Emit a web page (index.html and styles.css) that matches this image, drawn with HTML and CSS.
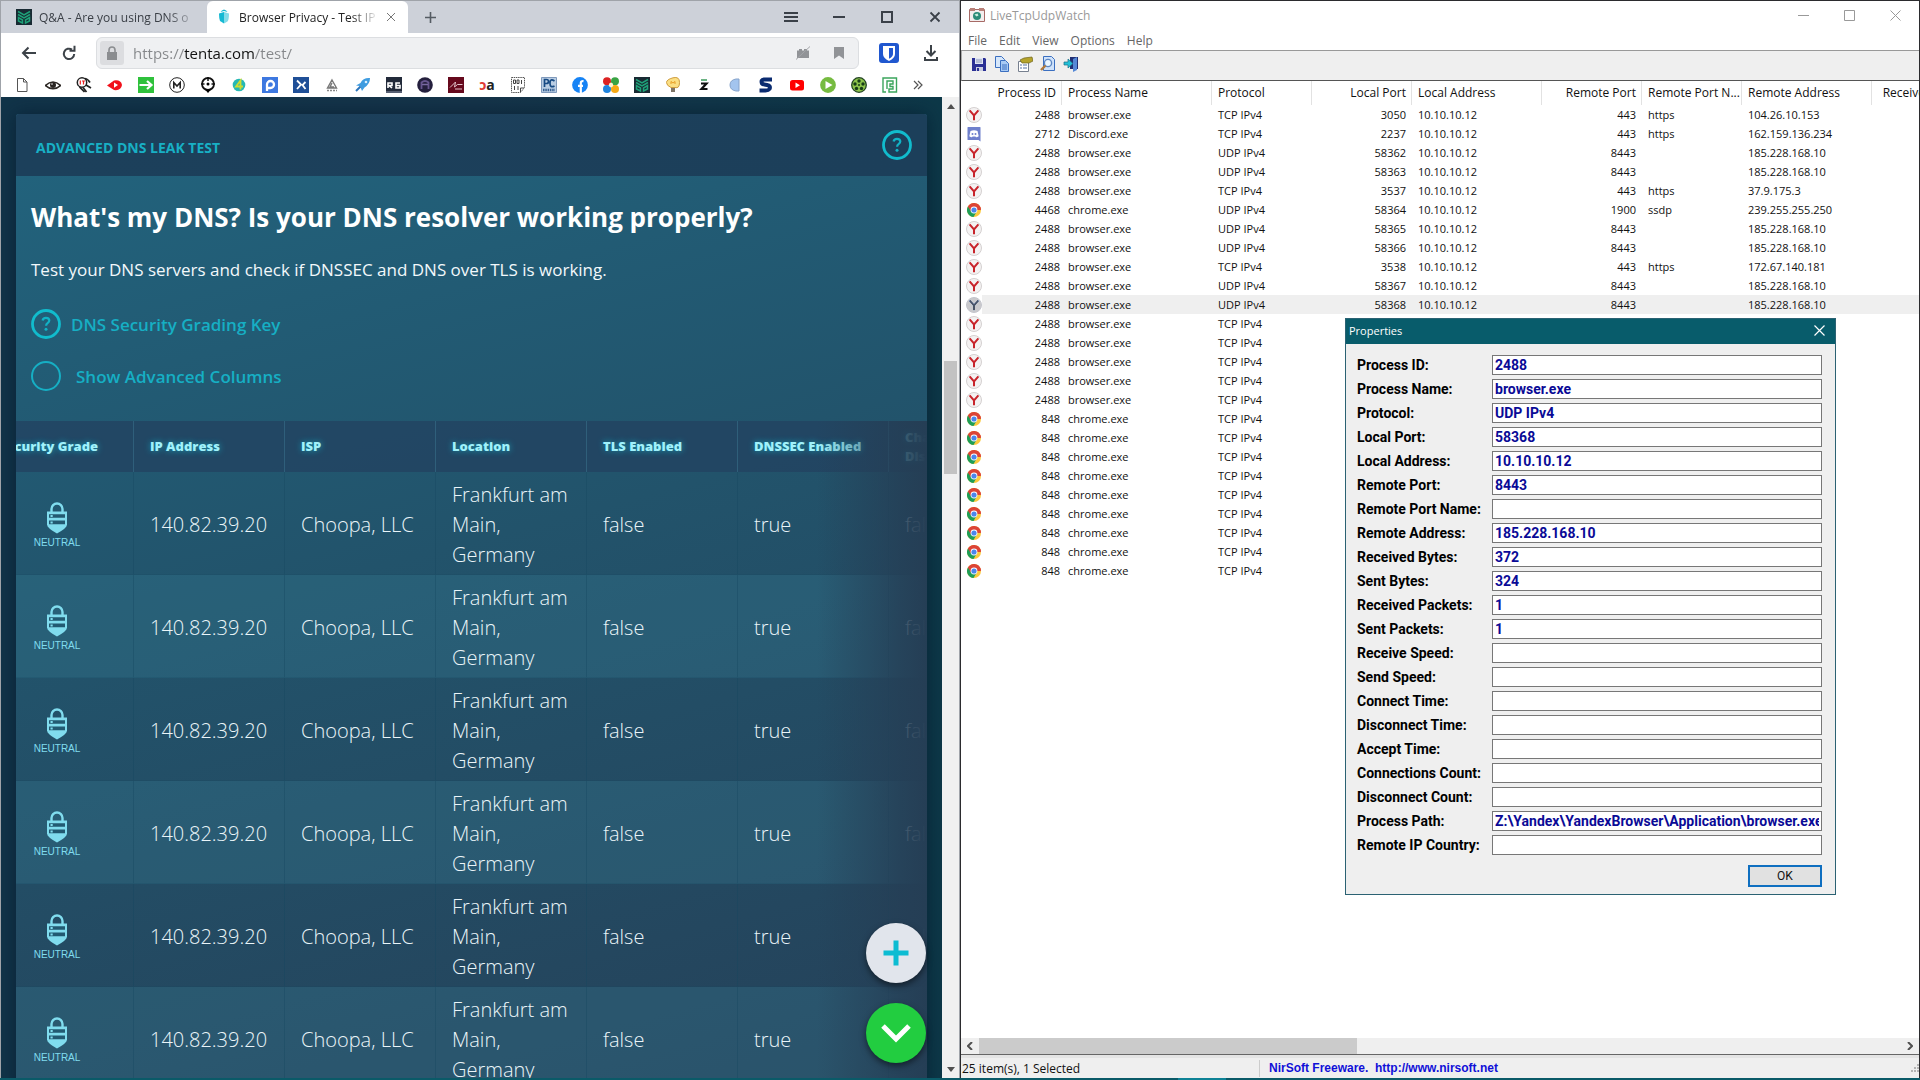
FILE: index.html
```html
<!DOCTYPE html>
<html lang="en">
<head>
    <meta charset="UTF-8">
    <meta name="viewport" content="width=device-width, initial-scale=1.0">
    <title>Browser Privacy - Test IP</title>
    <link rel="stylesheet" href="styles.css">
</head>
<body>
    <!-- Shared icons -->
    <svg class="defs" aria-hidden="true">
        <symbol id="i-yandex" viewBox="0 0 16 16">
            <circle cx="8" cy="8" r="7.500" fill="#f4f2f2" stroke="#d4d0d0"/>
            <path d="M3.600 3.400 8 8.400l4.400-5M8 8v5.200" fill="none" stroke="#c8242b" stroke-width="2"/>
        </symbol>
        <symbol id="i-chrome" viewBox="0 0 16 16">
            <circle cx="8" cy="8" r="7" fill="#fbc93d"/>
            <path d="M8 8 1.900 4.500A7 7 0 0 0 7.500 15l3.300-5.500z" fill="#1e9e57"/>
            <path d="M8 8H14.900V5.600H14.600A7 7 0 0 0 1.900 4.500L5 9.500z" fill="#dc4437"/>
            <circle cx="8" cy="8" r="3.400" fill="#fff"/>
            <circle cx="8" cy="8" r="2.600" fill="#4a86ec"/>
        </symbol>
        <symbol id="i-discord" viewBox="0 0 16 16">
            <path d="M2 1h12q.5 0 .5.5V15.500l-2-1.500H2q-.5 0-.5-.5v-12Q1.500 1 2 1z" fill="#6f80cc"/>
            <path d="M4.500 5q3.500-1.600 7 0l1.200 5.200q-1.700 1.300-2.700 1.100l-.6-.9h-2.800l-.6.9q-1 .2-2.700-1.100z" fill="#fff"/>
            <circle cx="6.500" cy="8" r="1" fill="#6f80cc"/>
            <circle cx="9.500" cy="8" r="1" fill="#6f80cc"/>
        </symbol>
        <symbol id="i-shield" viewBox="0 0 22 32">
            <path d="M5.500 10V7a5.500 5.500 0 0 1 11 0v3" fill="none" stroke="#80dcee" stroke-width="2.400"/>
            <path d="M1 9.500h20v13q0 3.500-10 9-10-5.500-10-9z" fill="#80dcee"/>
            <path d="M3 12.200h16v3.600H3zM3 18.600h16v3.600H3z" fill="#225a72"/>
            <path d="M4.500 13h2.200v2H4.500zM4.500 19.400h2.200v2H4.500z" fill="#80dcee"/>
        </symbol>
        <symbol id="i-leaf" viewBox="0 0 16 16">
            <path d="M0 0h16v16H0z" fill="#182a33"/>
            <path d="M2 2.500 8 6l6-3.500M2 5.500 8 9l6-3.500M2.500 8.500V12L6.500 14V11zM13.500 8.500V12L9.500 14V11z" fill="none" stroke="#1ea279" stroke-width="1.500"/>
        </symbol>
        <symbol id="i-help" viewBox="0 0 30 30">
            <circle cx="15" cy="15" r="13.500" fill="none" stroke="#11bccd" stroke-width="2.800"/>
            <path d="M11.600 11.500q.4-2.600 3.400-2.600 3.300 0 3.300 2.700 0 1.400-1.700 2.500-1.500 1-1.500 2.700" fill="none" stroke="#11b3c6" stroke-width="2.200"/>
            <circle cx="15" cy="20.300" r="1.500" fill="#11b3c6"/>
        </symbol>
    </svg>

    <div class="desktop">
        <!-- Browser window -->
        <section class="browser">
            <div class="tabstrip">
                <div class="tab">
                    <svg class="icon"><use href="#i-leaf"/></svg>
                    <span class="tab-title">Q&amp;A - Are you using DNS o</span>
                </div>
                <div class="tab active">
                    <svg class="icon" viewBox="0 0 16 16"><path d="M3 4.500 8 3v11.500L4 12q-1-3-1-7.500z" fill="#15b9d3"/><path d="M8 3l5 1.500q0 6-1.500 8L8 14.500z" fill="#83dce9"/><path d="M4.500 3q1-2 3.500-2.500Q10.500 1 11.500 3L8 2z" fill="#15b9d3"/></svg>
                    <span class="tab-title">Browser Privacy - Test IP</span>
                    <button class="plain" aria-label="Close tab"><svg width="10" height="10" viewBox="0 0 10 10"><path d="M1 1l8 8M9 1L1 9" stroke="#777"/></svg></button>
                </div>
                <button class="plain new-tab" aria-label="New tab"><svg width="11" height="11" viewBox="0 0 11 11"><path d="M5.500 0v11M0 5.500h11" stroke="#555c63" stroke-width="1.600"/></svg></button>
                <div class="win-buttons">
                    <button class="plain" aria-label="Menu"><svg width="16" height="16" viewBox="0 0 16 16"><path d="M1 4h14M1 8h14M1 12h14" stroke="#3a4048" stroke-width="2"/></svg></button>
                    <button class="plain" aria-label="Minimize"><svg width="16" height="16" viewBox="0 0 16 16"><path d="M2 8h12" stroke="#3a4048" stroke-width="2"/></svg></button>
                    <button class="plain" aria-label="Maximize"><svg width="16" height="16" viewBox="0 0 16 16"><path d="M3 3h10v10H3z" fill="none" stroke="#3a4048" stroke-width="2"/></svg></button>
                    <button class="plain" aria-label="Close"><svg width="16" height="16" viewBox="0 0 16 16"><path d="M3.500 3.500l9 9M12.500 3.500l-9 9" stroke="#3a4048" stroke-width="1.800"/></svg></button>
                </div>
            </div>

            <div class="navbar">
                <button class="plain" aria-label="Back"><svg width="16" height="16" viewBox="0 0 16 16"><path d="M15 8H2M7.500 2.500 2 8l5.500 5.500" fill="none" stroke="#3c4248" stroke-width="2"/></svg></button>
                <button class="plain" aria-label="Reload"><svg width="16" height="16" viewBox="0 0 16 16"><path d="M11 4.600A5.200 5.200 0 1 0 13.200 9" fill="none" stroke="#3c4248" stroke-width="2"/><path d="M8.500 5.800h5V.8" fill="none" stroke="#3c4248" stroke-width="2"/></svg></button>
                <div class="address">
                    <button class="lock" aria-label="Site information"><svg width="12" height="14" viewBox="0 0 12 14"><path d="M3 7V4a3 3 0 0 1 6 0v3" fill="none" stroke="#8b8d90" stroke-width="1.600"/><path d="M1 6h10v8H1z" fill="#8b8d90"/></svg></button>
                    <input class="url" type="text" aria-label="Address" value="https://tenta.com/test/">
                    <button class="plain" aria-label="Turbo"><svg width="16" height="16" viewBox="0 0 16 16"><path d="M2 5.500h2V4h3v1.500h2V4h3v1.500h2V13H2z" fill="#919397"/><path d="M1 14.500 15 1.500" stroke="#a2a4a8"/></svg></button>
                    <button class="plain" aria-label="Bookmark"><svg width="12" height="14" viewBox="0 0 12 14"><path d="M1 1h10v12L6 9.500 1 13z" fill="#919397"/></svg></button>
                </div>
                <button class="plain" aria-label="Bitwarden"><svg width="20" height="20" viewBox="0 0 20 20"><rect width="20" height="20" rx="3" fill="#2057cf"/><path d="M4 3h12v8q0 4-6 7-6-3-6-7z" fill="#fff"/><path d="M10 5h4v6q0 2.500-4 4.800z" fill="#2057cf"/></svg></button>
                <button class="plain" aria-label="Downloads"><svg width="16" height="18" viewBox="0 0 16 18"><path d="M8 1v10M3.500 7 8 11.500 12.500 7M2 13v3h12v-3" fill="none" stroke="#3c4248" stroke-width="2"/></svg></button>
            </div>

            <nav class="bookmarks">
                <a href="#" aria-label="Page"><svg class="icon" viewBox="0 0 16 16"><path d="M3.500 1.500h6l3.500 3.500v9.500H3.500zM9.500 1.500V5H13" fill="none" stroke="#555"/></svg></a>
                <a href="#" aria-label="Eye"><svg class="icon" viewBox="0 0 16 16"><path d="M.5 8.500Q8 1.500 15.500 8.500 8 15 .5 8.500z" fill="#fff" stroke="#2d2825" stroke-width="1.600"/><circle cx="8" cy="8" r="3" fill="#2a2523"/><circle cx="7" cy="7" r=".8" fill="#fff"/></svg></a>
                <a href="#" aria-label="IT"><svg class="icon" viewBox="0 0 16 16"><circle cx="6" cy="5.500" r="4.700" fill="#fff" stroke="#222" stroke-width="1.500"/><path d="M4.300 3.500v4M6 4h3M7.500 4v3.500" stroke="#e22" stroke-width="1.200"/><path d="M3.500 10l5 5M7 10.500l3.500 4.500M10 8l5 3M9 1.500q3 .5 5 4" fill="none" stroke="#222" stroke-width="1.700"/></svg></a>
                <a href="#" aria-label="Stream"><svg class="icon" viewBox="0 0 16 16"><path d="M0 8.500 7 3.500q7-1 8 4.500-1 6-8 5z" fill="#f1111b"/><path d="M7 5.500 11 8l-4 2.800z" fill="#fff"/></svg></a>
                <a href="#" aria-label="Arrow"><svg class="icon" viewBox="0 0 16 16"><path d="M0 0h16v16H0z" fill="#2fc13c"/><path d="M1.500 8H12M9 4l4.500 4L9 12" fill="none" stroke="#fff" stroke-width="2.200"/></svg></a>
                <a href="#" aria-label="M"><svg class="icon" viewBox="0 0 16 16"><circle cx="8" cy="8" r="7.300" fill="#fff" stroke="#222"/><path d="M4.800 11.500V5.500L8 9l3.200-3.500v6" fill="none" stroke="#222" stroke-width="1.600"/></svg></a>
                <a href="#" aria-label="Target"><svg class="icon" viewBox="0 0 16 16"><circle cx="8" cy="7" r="6" fill="none" stroke="#111" stroke-width="1.800"/><path d="M8 0v4M1 7h3.500M11.500 7H15" stroke="#111" stroke-width="1.500"/><circle cx="8" cy="7" r="1.500"/><path d="M5 12.500h6L8 16z"/></svg></a>
                <a href="#" aria-label="Four"><svg class="icon" viewBox="0 0 16 16"><circle cx="8" cy="8" r="6.300" fill="#25b8b4"/><path d="M9.500 12.500v-9L5 9.500h7" fill="none" stroke="#cddb31" stroke-width="1.800"/></svg></a>
                <a href="#" aria-label="P"><svg class="icon" viewBox="0 0 16 16"><path d="M0 0h16v16H0z" fill="#3d78e0"/><path d="M5 14V7.500a3.500 3.500 0 1 1 3.500 3.500H5" fill="none" stroke="#fff" stroke-width="2.300"/></svg></a>
                <a href="#" aria-label="Crossing"><svg class="icon" viewBox="0 0 16 16"><path d="M0 0h16v16H0z" fill="#1f4f97"/><path d="M4 3.500 8 7.500 4 12M12.500 5 9.500 8l3 4" fill="none" stroke="#fff" stroke-width="1.800"/></svg></a>
                <a href="#" aria-label="Pyramid"><svg class="icon" viewBox="0 0 16 16"><path d="M8 3l4.500 8H3.500zM8 6l-2 4h4" fill="none" stroke="#777" stroke-width="1.400"/><path d="M3 13.500h10" stroke="#888" stroke-width="1.500" stroke-dasharray="2 1"/></svg></a>
                <a href="#" aria-label="Rocket"><svg class="icon" viewBox="0 0 16 16"><path d="M15 1q-7-.5-9.500 5L1 8.500l4 .5 2 5 2.500-3.500Q15 7 15 1z" fill="#3f9ce0"/><path d="M1 14l4.500-4.500" stroke="#2b75bd" stroke-width="2"/><circle cx="11" cy="5" r="1.300" fill="#d8efff"/></svg></a>
                <a href="#" aria-label="R6"><svg class="icon" viewBox="0 0 16 16"><path d="M0 0h16v16H0z" fill="#222a3a"/><path d="M2 11V6h4v2.500H3L6 11M14 6h-4v5h4V8.500h-4" fill="none" stroke="#fff" stroke-width="1.600"/><path d="M0 14h16v2H0z" fill="#575f72"/></svg></a>
                <a href="#" aria-label="Helmet"><svg class="icon" viewBox="0 0 16 16"><circle cx="8" cy="8" r="7.800" fill="#241f3d"/><path d="M4.500 12V5.500q3.500-3 7 0V12" fill="none" stroke="#67568f" stroke-width="1.800"/><path d="M5 7.500h6" stroke="#796aa2" stroke-width="1.500"/></svg></a>
                <a href="#" aria-label="Signature"><svg class="icon" viewBox="0 0 16 16"><path d="M0 0h16v16H0z" fill="#66091d"/><path d="M2 10.500 7.500 5l-1 5 3-2.500h5M7 12h7" fill="none" stroke="#e3c5cc"/></svg></a>
                <a href="#" class="mark" aria-label="oa"><b class="red">ɔ</b><b>a</b></a>
                <a href="#" aria-label="Binary"><svg class="icon" viewBox="0 0 16 16"><path d="M1.500.5h13v10l-4 5h-9z" fill="#fff" stroke="#555" stroke-dasharray="1.500 .7"/><path d="M3.500 3h2v3.500h-2zM7 3h2v3.500H7zM11.500 3v4M4.500 9v4M8 9v4" fill="none" stroke="#444"/><path d="M14 11h-3.500v4" fill="none" stroke="#444"/></svg></a>
                <a href="#" aria-label="PC"><svg class="icon" viewBox="0 0 16 16"><path d="M.5.5h15v15H.5z" fill="#b9cde3" stroke="#7f99bb"/><path d="M3.500 10V2.500h2q2 0 2 2t-2 2h-2M13.500 4q-4.500-3-4.500 2.200t4.500 2.700" fill="none" stroke="#174a83" stroke-width="1.700"/><path d="M2 13h12" stroke="#355f91" stroke-width="2.500" stroke-dasharray="1.500 .8"/></svg></a>
                <a href="#" aria-label="Facebook"><svg class="icon" viewBox="0 0 16 16"><circle cx="8" cy="8" r="7.900" fill="#1683f5"/><path d="M8.800 16V5.800q0-2 2.700-1.700M6 8.800h5" fill="none" stroke="#fff" stroke-width="2.200"/></svg></a>
                <a href="#" aria-label="Colours"><svg class="icon" viewBox="0 0 16 16"><circle cx="4" cy="4.200" r="4" fill="#db2222"/><circle cx="12" cy="4.200" r="4" fill="#39a344"/><circle cx="4" cy="12" r="4" fill="#1e83dd"/><circle cx="12" cy="12" r="4" fill="#f7a915"/><circle cx="8" cy="8" r="2.200" fill="#fff3d0"/></svg></a>
                <a href="#" aria-label="Q&amp;A"><svg class="icon"><use href="#i-leaf"/></svg></a>
                <a href="#" aria-label="Ideas"><svg class="icon" viewBox="0 0 16 16"><path d="M6 10.500Q1.500 8.500 1.500 5.500T8 .8t6.500 4.700T10 10.500z" fill="#fbdf83" stroke="#cf9d3f"/><path d="M6 7V4.500L8 6l2-1.500V7" fill="none" stroke="#e79d25"/><path d="M6 11h4v4H6z" fill="#7d7467"/></svg></a>
                <a href="#" aria-label="z"><svg class="icon" viewBox="0 0 16 16"><path d="M5 3h6" stroke="#3a9a5a" stroke-width="1.500"/><path d="M5 6.500h5.500L5.500 12H11.500" fill="none" stroke="#111" stroke-width="2.200"/></svg></a>
                <a href="#" aria-label="Half"><svg class="icon" viewBox="0 0 16 16"><path d="M12 2v12H9q-6-1-6-6t6-6z" fill="#a3c4ee" stroke="#86a3cb"/></svg></a>
                <a href="#" aria-label="S"><svg class="icon" viewBox="0 0 16 16"><path d="M14 2.500H6Q2.500 3 4 6.500 5 7.500 9 8q4 .8 2.500 4-1 1.500-4 1.500h-6" fill="none" stroke="#0a2b70" stroke-width="4"/></svg></a>
                <a href="#" aria-label="YouTube"><svg class="icon" viewBox="0 0 16 16"><rect x="1" y="3" width="14" height="10.500" rx="2.500" fill="#f00"/><path d="M6.500 5.500 11 8.200l-4.500 2.800z" fill="#fff"/></svg></a>
                <a href="#" aria-label="Play"><svg class="icon" viewBox="0 0 16 16"><circle cx="8" cy="8" r="7.900" fill="#76bb40"/><path d="M5.500 4 12.500 8l-7 4z" fill="#fff"/></svg></a>
                <a href="#" aria-label="Film"><svg class="icon" viewBox="0 0 16 16"><circle cx="8" cy="8" r="7.300" fill="#8bc34a" stroke="#242" stroke-width="1.300"/><g fill="#173d17"><circle cx="8" cy="4" r="1.700"/><circle cx="12" cy="7" r="1.700"/><circle cx="4" cy="7" r="1.700"/><circle cx="5.500" cy="11.500" r="1.700"/><circle cx="10.500" cy="11.500" r="1.700"/><circle cx="8" cy="8" r="1"/></g></svg></a>
                <a href="#" aria-label="Maze"><svg class="icon" viewBox="0 0 16 16"><path d="M4 15H1V1h13.500v14H7v-3h4V9.500H8V7h3V4H5v8" fill="none" stroke="#3ba55c" stroke-width="1.400"/></svg></a>
                <button class="plain more" aria-label="More bookmarks"><svg width="10" height="10" viewBox="0 0 10 10"><path d="M1 1l4 4-4 4M5 1l4 4-4 4" fill="none" stroke="#555" stroke-width="1.200"/></svg></button>
            </nav>

            <div class="viewport">
                <div class="page">
                    <div class="card">
                        <header class="card-head">
                            <h2>ADVANCED DNS LEAK TEST</h2>
                            <button class="plain" aria-label="Help"><svg width="30" height="30"><use href="#i-help"/></svg></button>
                        </header>
                        <div class="intro">
                            <h1>What's my DNS? Is your DNS resolver working properly?</h1>
                            <p>Test your DNS servers and check if DNSSEC and DNS over TLS is working.</p>
                            <a class="option" href="#"><svg width="30" height="30"><use href="#i-help"/></svg>DNS Security Grading Key</a>
                            <label class="option toggle"><input type="checkbox">Show Advanced Columns</label>
                        </div>
                        <div class="scroller">
                            <table class="results">
                                <thead>
                                    <tr><th>Security Grade</th><th>IP Address</th><th>ISP</th><th>Location</th><th>TLS Enabled</th><th>DNSSEC Enabled</th><th>Chain<br>Discovery</th></tr>
                                </thead>
                                <tbody>
                                    <tr><td><div class="grade"><svg><use href="#i-shield"/></svg>NEUTRAL</div></td><td>140.82.39.20</td><td>Choopa, LLC</td><td>Frankfurt am Main, Germany</td><td>false</td><td>true</td><td>false</td></tr>
                                    <tr><td><div class="grade"><svg><use href="#i-shield"/></svg>NEUTRAL</div></td><td>140.82.39.20</td><td>Choopa, LLC</td><td>Frankfurt am Main, Germany</td><td>false</td><td>true</td><td>false</td></tr>
                                    <tr><td><div class="grade"><svg><use href="#i-shield"/></svg>NEUTRAL</div></td><td>140.82.39.20</td><td>Choopa, LLC</td><td>Frankfurt am Main, Germany</td><td>false</td><td>true</td><td>false</td></tr>
                                    <tr><td><div class="grade"><svg><use href="#i-shield"/></svg>NEUTRAL</div></td><td>140.82.39.20</td><td>Choopa, LLC</td><td>Frankfurt am Main, Germany</td><td>false</td><td>true</td><td>false</td></tr>
                                    <tr><td><div class="grade"><svg><use href="#i-shield"/></svg>NEUTRAL</div></td><td>140.82.39.20</td><td>Choopa, LLC</td><td>Frankfurt am Main, Germany</td><td>false</td><td>true</td><td>false</td></tr>
                                    <tr><td><div class="grade"><svg><use href="#i-shield"/></svg>NEUTRAL</div></td><td>140.82.39.20</td><td>Choopa, LLC</td><td>Frankfurt am Main, Germany</td><td>false</td><td>true</td><td>false</td></tr>
                                </tbody>
                            </table>
                        </div>
                    </div>
                    <div class="fabs">
                        <button class="fab" aria-label="Add"><svg width="26" height="26" viewBox="0 0 26 26"><path d="M13 .5v25M.5 13h25" stroke="#0cbcd2" stroke-width="5"/></svg></button>
                        <button class="fab green" aria-label="Scroll down"><svg width="30" height="20" viewBox="0 0 30 20"><path d="M2 3l13 13L28 3" fill="none" stroke="#fff" stroke-width="5"/></svg></button>
                    </div>
                </div>
                <div class="vscroll">
                    <svg width="8" height="5" viewBox="0 0 8 5"><path d="M0 5l4-5 4 5z" fill="#505050"/></svg>
                    <div class="vthumb"></div>
                    <svg width="8" height="5" viewBox="0 0 8 5"><path d="M0 0l4 5 4-5z" fill="#505050"/></svg>
                </div>
            </div>
        </section>

        <!-- LiveTcpUdpWatch window -->
        <section class="watch">
            <div class="titlebar">
                <svg class="icon" viewBox="0 0 16 16"><path d="M.5 2.500h15v12H.5z" fill="#f3eeee" stroke="#a76a66"/><path d="M1 1h5v3H1zM10 1h5v3h-5z" fill="#b98078"/><circle cx="8" cy="9" r="4" fill="#2b8c78"/><path d="M5.500 7.500l3-1 1 2-2 1z" fill="#c9eedd"/></svg>
                <span>LiveTcpUdpWatch</span>
                <div class="caption">
                    <button class="plain" aria-label="Minimize"><svg width="11" height="11" viewBox="0 0 11 11"><path d="M0 5.500h11" stroke="#999"/></svg></button>
                    <button class="plain" aria-label="Maximize"><svg width="11" height="11" viewBox="0 0 11 11"><path d="M.5.5h10v10H.5z" fill="none" stroke="#999"/></svg></button>
                    <button class="plain" aria-label="Close"><svg width="11" height="11" viewBox="0 0 11 11"><path d="M.5.5l10 10M10.500.5l-10 10" stroke="#999"/></svg></button>
                </div>
            </div>
            <div class="menubar">
                <button class="plain">File</button>
                <button class="plain">Edit</button>
                <button class="plain">View</button>
                <button class="plain">Options</button>
                <button class="plain">Help</button>
            </div>
            <div class="toolbar">
                <button class="plain" aria-label="Save"><svg class="icon" viewBox="0 0 16 16"><path d="M1 2h13l1 1v12H1z" fill="#2a2f94"/><path d="M4 2h8v6H4z" fill="#dfe5f3"/><path d="M5 4h6M5 6h6" stroke="#8a93b8"/><path d="M5 11h7v4H5z" fill="#c9cde0"/><path d="M6 12h2v3H6z" fill="#2a2f94"/></svg></button>
                <button class="plain" aria-label="Copy"><svg class="icon" viewBox="0 0 16 16"><path d="M1.500.5h6l3 3v8h-9z" fill="#d6e7fb" stroke="#3b6fc0"/><path d="M6.500 4.500h5l3 3v8h-8z" fill="#a9cbf4" stroke="#3b6fc0"/><path d="M8 9h5M8 11h5M8 13h5" stroke="#3b6fc0"/></svg></button>
                <button class="plain" aria-label="Properties"><svg class="icon" viewBox="0 0 16 16"><path d="M1.500 5.500h10v10h-10z" fill="#fff" stroke="#77808f"/><path d="M3 9h2M6 9h4M3 12h2M6 12h4" stroke="#5571a3"/><path d="M3 4l4-2 8-1 1 4-4 2H8L5 7z" fill="#b5a32b" stroke="#6e641c" stroke-width=".7"/></svg></button>
                <button class="plain" aria-label="Find"><svg class="icon" viewBox="0 0 16 16"><path d="M3.500.5h8l3 3v11h-11z" fill="#cfe2fa" stroke="#3b6fc0"/><circle cx="8" cy="7" r="3.600" fill="#eaf6ff" stroke="#5d87c4" stroke-width="1.400"/><path d="M5.500 9.500 1 14" stroke="#b07a3c" stroke-width="2.400"/></svg></button>
                <button class="plain" aria-label="Exit"><svg class="icon" viewBox="0 0 16 16"><path d="M7 1h8v12H7z" fill="#222f74"/><path d="M10 3l4-2v13l-4 2z" fill="#5588d6"/><path d="M1 6h4V3l5 4.500L5 12V9H1z" fill="#22c1d8" stroke="#1a6f85" stroke-width=".7"/></svg></button>
            </div>
            <div class="list">
                <table class="conns">
                    <colgroup><col class="c-narrow"><col class="c-name"><col class="c-narrow"><col class="c-narrow"><col class="c-addr"><col class="c-narrow"><col class="c-narrow"><col class="c-addr"><col class="c-narrow"></colgroup>
                    <thead>
                        <tr><th class="num">Process ID</th><th>Process Name</th><th>Protocol</th><th class="num">Local Port</th><th>Local Address</th><th class="num">Remote Port</th><th>Remote Port N...</th><th>Remote Address</th><th class="num">Received Bytes</th></tr>
                    </thead>
                    <tbody>
                        <tr><td><svg><use href="#i-yandex"/></svg>2488</td><td>browser.exe</td><td>TCP IPv4</td><td>3050</td><td>10.10.10.12</td><td>443</td><td>https</td><td>104.26.10.153</td><td></td></tr>
                        <tr><td><svg><use href="#i-discord"/></svg>2712</td><td>Discord.exe</td><td>TCP IPv4</td><td>2237</td><td>10.10.10.12</td><td>443</td><td>https</td><td>162.159.136.234</td><td></td></tr>
                        <tr><td><svg><use href="#i-yandex"/></svg>2488</td><td>browser.exe</td><td>UDP IPv4</td><td>58362</td><td>10.10.10.12</td><td>8443</td><td></td><td>185.228.168.10</td><td></td></tr>
                        <tr><td><svg><use href="#i-yandex"/></svg>2488</td><td>browser.exe</td><td>UDP IPv4</td><td>58363</td><td>10.10.10.12</td><td>8443</td><td></td><td>185.228.168.10</td><td></td></tr>
                        <tr><td><svg><use href="#i-yandex"/></svg>2488</td><td>browser.exe</td><td>TCP IPv4</td><td>3537</td><td>10.10.10.12</td><td>443</td><td>https</td><td>37.9.175.3</td><td></td></tr>
                        <tr><td><svg><use href="#i-chrome"/></svg>4468</td><td>chrome.exe</td><td>UDP IPv4</td><td>58364</td><td>10.10.10.12</td><td>1900</td><td>ssdp</td><td>239.255.255.250</td><td></td></tr>
                        <tr><td><svg><use href="#i-yandex"/></svg>2488</td><td>browser.exe</td><td>UDP IPv4</td><td>58365</td><td>10.10.10.12</td><td>8443</td><td></td><td>185.228.168.10</td><td></td></tr>
                        <tr><td><svg><use href="#i-yandex"/></svg>2488</td><td>browser.exe</td><td>UDP IPv4</td><td>58366</td><td>10.10.10.12</td><td>8443</td><td></td><td>185.228.168.10</td><td></td></tr>
                        <tr><td><svg><use href="#i-yandex"/></svg>2488</td><td>browser.exe</td><td>TCP IPv4</td><td>3538</td><td>10.10.10.12</td><td>443</td><td>https</td><td>172.67.140.181</td><td></td></tr>
                        <tr><td><svg><use href="#i-yandex"/></svg>2488</td><td>browser.exe</td><td>UDP IPv4</td><td>58367</td><td>10.10.10.12</td><td>8443</td><td></td><td>185.228.168.10</td><td></td></tr>
                        <tr class="selected"><td><svg><use href="#i-yandex"/></svg>2488</td><td>browser.exe</td><td>UDP IPv4</td><td>58368</td><td>10.10.10.12</td><td>8443</td><td></td><td>185.228.168.10</td><td></td></tr>
                        <tr><td><svg><use href="#i-yandex"/></svg>2488</td><td>browser.exe</td><td>TCP IPv4</td><td colspan="6"></td></tr>
                        <tr><td><svg><use href="#i-yandex"/></svg>2488</td><td>browser.exe</td><td>TCP IPv4</td><td colspan="6"></td></tr>
                        <tr><td><svg><use href="#i-yandex"/></svg>2488</td><td>browser.exe</td><td>TCP IPv4</td><td colspan="6"></td></tr>
                        <tr><td><svg><use href="#i-yandex"/></svg>2488</td><td>browser.exe</td><td>TCP IPv4</td><td colspan="6"></td></tr>
                        <tr><td><svg><use href="#i-yandex"/></svg>2488</td><td>browser.exe</td><td>TCP IPv4</td><td colspan="6"></td></tr>
                        <tr><td><svg><use href="#i-chrome"/></svg>848</td><td>chrome.exe</td><td>TCP IPv4</td><td colspan="6"></td></tr>
                        <tr><td><svg><use href="#i-chrome"/></svg>848</td><td>chrome.exe</td><td>TCP IPv4</td><td colspan="6"></td></tr>
                        <tr><td><svg><use href="#i-chrome"/></svg>848</td><td>chrome.exe</td><td>TCP IPv4</td><td colspan="6"></td></tr>
                        <tr><td><svg><use href="#i-chrome"/></svg>848</td><td>chrome.exe</td><td>TCP IPv4</td><td colspan="6"></td></tr>
                        <tr><td><svg><use href="#i-chrome"/></svg>848</td><td>chrome.exe</td><td>TCP IPv4</td><td colspan="6"></td></tr>
                        <tr><td><svg><use href="#i-chrome"/></svg>848</td><td>chrome.exe</td><td>TCP IPv4</td><td colspan="6"></td></tr>
                        <tr><td><svg><use href="#i-chrome"/></svg>848</td><td>chrome.exe</td><td>TCP IPv4</td><td colspan="6"></td></tr>
                        <tr><td><svg><use href="#i-chrome"/></svg>848</td><td>chrome.exe</td><td>TCP IPv4</td><td colspan="6"></td></tr>
                        <tr><td><svg><use href="#i-chrome"/></svg>848</td><td>chrome.exe</td><td>TCP IPv4</td><td colspan="6"></td></tr>
                    </tbody>
                </table>
            </div>
            <div class="hscroll">
                <svg width="6" height="8" viewBox="0 0 6 8"><path d="M5 0 1 4l4 4" fill="none" stroke="#505050" stroke-width="2"/></svg>
                <div class="htrack"><div class="hthumb"></div></div>
                <svg width="6" height="8" viewBox="0 0 6 8"><path d="M1 0l4 4-4 4" fill="none" stroke="#505050" stroke-width="2"/></svg>
            </div>
            <footer class="statusbar">
                <span class="count">25 item(s), 1 Selected</span>
                <a href="#">NirSoft Freeware.&nbsp; http://www.nirsoft.net</a>
                <svg width="9" height="9" viewBox="0 0 9 9"><path d="M7 1h2M4 4h2M7 4h2M1 7h2M4 7h2M7 7h2" stroke="#b4b4b4" stroke-width="2"/></svg>
            </footer>

            <!-- Properties dialog -->
            <form class="dialog">
                <div class="dialog-title">
                    <span>Properties</span>
                    <button type="button" class="plain" aria-label="Close"><svg width="11" height="11" viewBox="0 0 11 11"><path d="M.5.5l10 10M10.500.5l-10 10" stroke="#fff" stroke-width="1.200"/></svg></button>
                </div>
                <div class="fields">
                    <label for="f1">Process ID:</label><input id="f1" type="text" value="2488" readonly>
                    <label for="f2">Process Name:</label><input id="f2" type="text" value="browser.exe" readonly>
                    <label for="f3">Protocol:</label><input id="f3" type="text" value="UDP IPv4" readonly>
                    <label for="f4">Local Port:</label><input id="f4" type="text" value="58368" readonly>
                    <label for="f5">Local Address:</label><input id="f5" type="text" value="10.10.10.12" readonly>
                    <label for="f6">Remote Port:</label><input id="f6" type="text" value="8443" readonly>
                    <label for="f7">Remote Port Name:</label><input id="f7" type="text" value="" readonly>
                    <label for="f8">Remote Address:</label><input id="f8" type="text" value="185.228.168.10" readonly>
                    <label for="f9">Received Bytes:</label><input id="f9" type="text" value="372" readonly>
                    <label for="f10">Sent Bytes:</label><input id="f10" type="text" value="324" readonly>
                    <label for="f11">Received Packets:</label><input id="f11" type="text" value="1" readonly>
                    <label for="f12">Sent Packets:</label><input id="f12" type="text" value="1" readonly>
                    <label for="f13">Receive Speed:</label><input id="f13" type="text" value="" readonly>
                    <label for="f14">Send Speed:</label><input id="f14" type="text" value="" readonly>
                    <label for="f15">Connect Time:</label><input id="f15" type="text" value="" readonly>
                    <label for="f16">Disconnect Time:</label><input id="f16" type="text" value="" readonly>
                    <label for="f17">Accept Time:</label><input id="f17" type="text" value="" readonly>
                    <label for="f18">Connections Count:</label><input id="f18" type="text" value="" readonly>
                    <label for="f19">Disconnect Count:</label><input id="f19" type="text" value="" readonly>
                    <label for="f20">Process Path:</label><input id="f20" type="text" value="Z:\Yandex\YandexBrowser\Application\browser.exe" readonly>
                    <label for="f21">Remote IP Country:</label><input id="f21" type="text" value="" readonly>
                </div>
                <button type="button" class="ok">OK</button>
            </form>
        </section>
    </div>
    <div class="taskbar"><div class="task"></div></div>
</body>
</html>
```

FILE: styles.css
```css
* {
    box-sizing: border-box;
}
body {
    margin: 0;
    height: 100vh;
    display: flex;
    flex-direction: column;
    overflow: hidden;
    background: #26282b;
    font-family: "Open Sans", "Noto Sans", sans-serif;
}
button, input {
    font: inherit;
}
.plain {
    display: flex;
    align-items: center;
    justify-content: center;
    padding: 0;
    border: none;
    background: none;
    color: inherit;
}
svg {
    display: block;
    flex: none;
}
.defs {
    position: absolute;
    width: 0;
    height: 0;
}
.icon {
    width: 16px;
    height: 16px;
}
.desktop {
    flex: 1;
    min-height: 0;
    display: grid;
    grid-template-columns: 1fr 1fr;
}

/* Browser */
.browser {
    min-width: 0;
    min-height: 0;
    display: flex;
    flex-direction: column;
    border: 1px solid #9fa3a9;
    border-bottom: none;
    background: #fff;
}
.tabstrip {
    height: 32px;
    display: flex;
    align-items: stretch;
    background: #cdd1d9;
    font-size: 12px;
    color: #3a3f46;
}
.tab {
    width: 206px;
    display: flex;
    align-items: center;
    gap: 7px;
    padding: 0 8px 0 15px;
}
.tab.active {
    width: 201px;
    padding: 0 12px 0 9px;
    background: #fff;
    border-radius: 6px 6px 0 0;
    color: #222;
}
.tab-title {
    flex: 1;
    overflow: hidden;
    white-space: nowrap;
    mask-image: linear-gradient(90deg, #000 80%, transparent);
}
.new-tab {
    width: 44px;
}
.win-buttons {
    flex: 1;
    display: flex;
    justify-content: flex-end;
    gap: 32px;
    padding-right: 16px;
}
.navbar {
    height: 40px;
    display: flex;
    align-items: center;
    gap: 24px;
    padding: 0 20px;
}
.address {
    flex: 1;
    height: 32px;
    display: flex;
    align-items: center;
    gap: 22px;
    margin: 0 -4px 0 -5px;
    padding: 0 13px 0 3px;
    border: 1px solid #dcdee1;
    border-radius: 6px;
    background: #eff0f2;
}
.lock {
    width: 24px;
    height: 24px;
    display: flex;
    align-items: center;
    justify-content: center;
    margin-right: -13px;
    padding: 0;
    border: none;
    border-radius: 3px;
    background: #dcdde0;
}
.url {
    flex: 1;
    min-width: 0;
    padding: 0;
    border: none;
    outline: none;
    font-size: 15px;
    line-height: 24px;
    color: #111;
    /* greys out the scheme and path, keeps the host black */
    background: linear-gradient(90deg, #85878a 51px, #111 51px 121px, #85878a 121px);
    background-clip: text;
    -webkit-background-clip: text;
    -webkit-text-fill-color: transparent;
}
.bookmarks {
    height: 24px;
    display: flex;
    align-items: center;
    gap: 15px;
    padding-left: 13px;
}
.bookmarks a {
    width: 16px;
    height: 16px;
}
.mark {
    display: flex;
    justify-content: center;
    font-size: 14px;
    line-height: 16px;
    color: #222;
    text-decoration: none;
}
.red {
    color: #e03a34;
}
.viewport {
    flex: 1;
    min-height: 0;
    display: flex;
}
.page {
    position: relative;
    flex: 1;
    min-width: 0;
    overflow: hidden;
    padding: 17px 15px 0;
    background: linear-gradient(90deg, #113449, #15344a 50%, #0d3848);
}
.card {
    border-radius: 3px 3px 0 0;
    background: linear-gradient(165deg, #22647e, #22536b 45%, #254159);
    box-shadow: 0 0 18px rgba(5, 22, 42, 0.6);
}
.card-head {
    height: 62px;
    display: flex;
    align-items: center;
    justify-content: space-between;
    padding: 0 15px 0 20px;
    border-radius: 3px 3px 0 0;
    background: linear-gradient(90deg, #1c405b, #1c3f5a);
}
.card-head h2 {
    margin: 5px 0 0;
    font-size: 14px;
    line-height: 20px;
    color: #18b0c5;
}
.intro {
    display: flex;
    flex-direction: column;
    align-items: flex-start;
    height: 245px;
    padding: 23px 15px 0;
}
.intro h1 {
    margin: 0;
    font-size: 26px;
    line-height: 36px;
    color: #fff;
    white-space: nowrap;
}
.intro p {
    margin: 21px 0 25px;
    font-size: 17px;
    line-height: 28px;
    color: #f2f8fb;
}
.option {
    height: 30px;
    display: flex;
    align-items: center;
    gap: 10px;
    font-size: 17px;
    font-weight: 600;
    color: #16afc4;
    text-decoration: none;
}
.toggle {
    gap: 15px;
    margin-top: 22px;
}
.toggle input {
    appearance: none;
    width: 30px;
    height: 30px;
    margin: 0;
    border: 2px solid #16afc4;
    border-radius: 50%;
}
.scroller {
    position: relative;
    overflow: hidden;
}
.scroller::after {
    content: "";
    position: absolute;
    top: 0;
    right: 0;
    bottom: 0;
    width: 110px;
    background: linear-gradient(90deg, rgba(37, 62, 85, 0), rgba(37, 62, 85, 0.8) 75%, #253e55);
}
.results {
    width: 1057px;
    margin-left: -33px;
    table-layout: fixed;
    border-collapse: separate;
    border-spacing: 0;
}
.results th {
    height: 51px;
    padding: 0 16px;
    border-right: 1px solid rgba(60, 120, 145, 0.5);
    background: rgba(35, 66, 96, 0.75);
    text-align: left;
    font-size: 13px;
    font-weight: 800;
    line-height: 19px;
    color: #a0f1fb;
    text-shadow: 0 0 6px #17a6bd;
}
.results td {
    height: 103px;
    padding: 8px 16px 4px;
    border-right: 1px solid rgba(20, 70, 95, 0.35);
    border-bottom: 1px solid rgba(20, 70, 95, 0.2);
    font-size: 20px;
    font-weight: 300;
    line-height: 30px;
    color: #eaf5f9;
}
.results tr:nth-child(even) td {
    background: rgba(55, 125, 150, 0.3);
}
.grade {
    width: 48px;
    display: flex;
    flex-direction: column;
    align-items: center;
    gap: 3px;
    margin-left: 34px;
    font: 10px/12px "Liberation Sans", Arial, sans-serif;
    color: #80dcee;
}
.grade svg {
    width: 22px;
    height: 32px;
}
.fabs {
    position: absolute;
    right: 16px;
    bottom: 15px;
    display: grid;
    gap: 20px;
}
.fab {
    width: 60px;
    height: 60px;
    display: flex;
    align-items: center;
    justify-content: center;
    padding: 0;
    border: none;
    border-radius: 50%;
    background: #e1e5ec;
    box-shadow: 0 3px 6px rgba(0, 0, 0, 0.5);
}
.fab.green {
    background: #22cd40;
}
.vscroll {
    width: 17px;
    display: flex;
    flex-direction: column;
    align-items: center;
    justify-content: space-between;
    padding: 7px 0 6px;
    background: #f0f0f0;
}
.vthumb {
    width: 13px;
    height: 113px;
    margin-bottom: 342px;
    background: #c2c2c2;
}

/* Connection watcher */
.watch {
    position: relative;
    min-width: 0;
    min-height: 0;
    display: flex;
    flex-direction: column;
    border: 1px solid #2b2b2e;
    border-bottom: none;
    background: #fff;
    font-size: 12px;
    color: #111;
}
.titlebar {
    height: 30px;
    display: flex;
    align-items: center;
    gap: 5px;
    padding: 0 18px 2px 8px;
    color: #999;
}
.caption {
    flex: 1;
    display: flex;
    justify-content: flex-end;
    gap: 35px;
}
.menubar {
    height: 20px;
    display: flex;
    align-items: center;
    gap: 12px;
    padding-left: 7px;
    border-bottom: 1px solid #999;
    color: #666;
}
.toolbar {
    height: 30px;
    display: flex;
    align-items: center;
    gap: 7px;
    padding-left: 9px;
    padding-bottom: 4px;
    border-bottom: 1px solid #555;
    border-left: 1px solid #aaa;
    background: #efefef;
}
.list {
    flex: 1;
    min-height: 0;
    overflow: hidden;
}
.conns {
    width: 1010px;
    margin-left: 1px;
    table-layout: fixed;
    border-collapse: separate;
    border-spacing: 0;
    line-height: 19px;
    white-space: nowrap;
}
.c-narrow {
    width: 100px;
}
.c-name {
    width: 150px;
}
.c-addr {
    width: 130px;
}
.conns th {
    height: 24px;
    padding: 0 5px 2px 6px;
    border-right: 1px solid #e2e2e2;
    text-align: left;
    font-weight: 400;
    overflow: hidden;
}
.conns .num {
    text-align: right;
}
.conns td {
    height: 19px;
    padding: 0 6px;
    font-size: 11px;
}
.conns td:first-child {
    display: flex;
    justify-content: space-between;
    align-items: center;
    padding: 0 2px 0 4px;
}
.conns td svg {
    width: 16px;
    height: 16px;
}
.conns td:nth-child(4), .conns td:nth-child(6) {
    text-align: right;
}
.selected td {
    background: #efefef;
}
.selected td:first-child {
    background: linear-gradient(90deg, #fff 20px, #efefef 20px);
}
.selected svg {
    filter: sepia(1) hue-rotate(180deg) brightness(0.8);
}
.hscroll {
    height: 17px;
    display: flex;
    align-items: center;
    padding: 0 6px;
    border-bottom: 1px solid #666;
    background: #efefef;
}
.htrack {
    flex: 1;
    height: 16px;
    padding: 0 6px;
}
.hthumb {
    width: 41%;
    height: 16px;
    background: #cbcbcb;
}
.statusbar {
    height: 23px;
    display: flex;
    align-items: center;
    border-top: 3px solid #e4e4e4;
    background: #efefef;
    padding-left: 1px;
}
.count {
    width: 298px;
    border-right: 1px solid #ccc;
    margin-right: 9px;
}
.statusbar a {
    flex: 1;
    font: bold 12px/18px "Liberation Sans", Arial, sans-serif;
    color: #1010d8;
    text-decoration: none;
}

/* Properties dialog */
.dialog {
    position: absolute;
    top: 317px;
    right: 83px;
    width: 491px;
    border: 1px solid #2b6273;
    background: #efefef;
    font-family: Roboto, "Liberation Sans", sans-serif;
}
.dialog-title {
    height: 25px;
    display: flex;
    align-items: center;
    justify-content: space-between;
    padding: 0 10px 2px 3px;
    background: #085c6b;
    color: #fff;
    font-family: "Open Sans", "Noto Sans", sans-serif;
    font-size: 11px;
}
.fields {
    display: grid;
    grid-template-columns: 135px 1fr;
    row-gap: 4px;
    padding: 11px 13px 0 11px;
    font-size: 14px;
    font-weight: 700;
    line-height: 20px;
    color: #000;
}
.fields input {
    min-width: 0;
    height: 20px;
    padding: 0 2px;
    border: 1px solid #777;
    border-radius: 0;
    background: #fff;
    color: #0a0a96;
}
.ok {
    display: block;
    width: 74px;
    height: 22px;
    margin: 10px 13px 7px auto;
    padding: 0;
    border: 2px solid #0f6fc0;
    background: #e1e1e1;
    color: #111;
}

.taskbar {
    height: 2px;
    display: flex;
    background: #0a5a68;
}
.task {
    width: 48px;
    margin-left: 1178px;
    background: #0e8296;
}
```
